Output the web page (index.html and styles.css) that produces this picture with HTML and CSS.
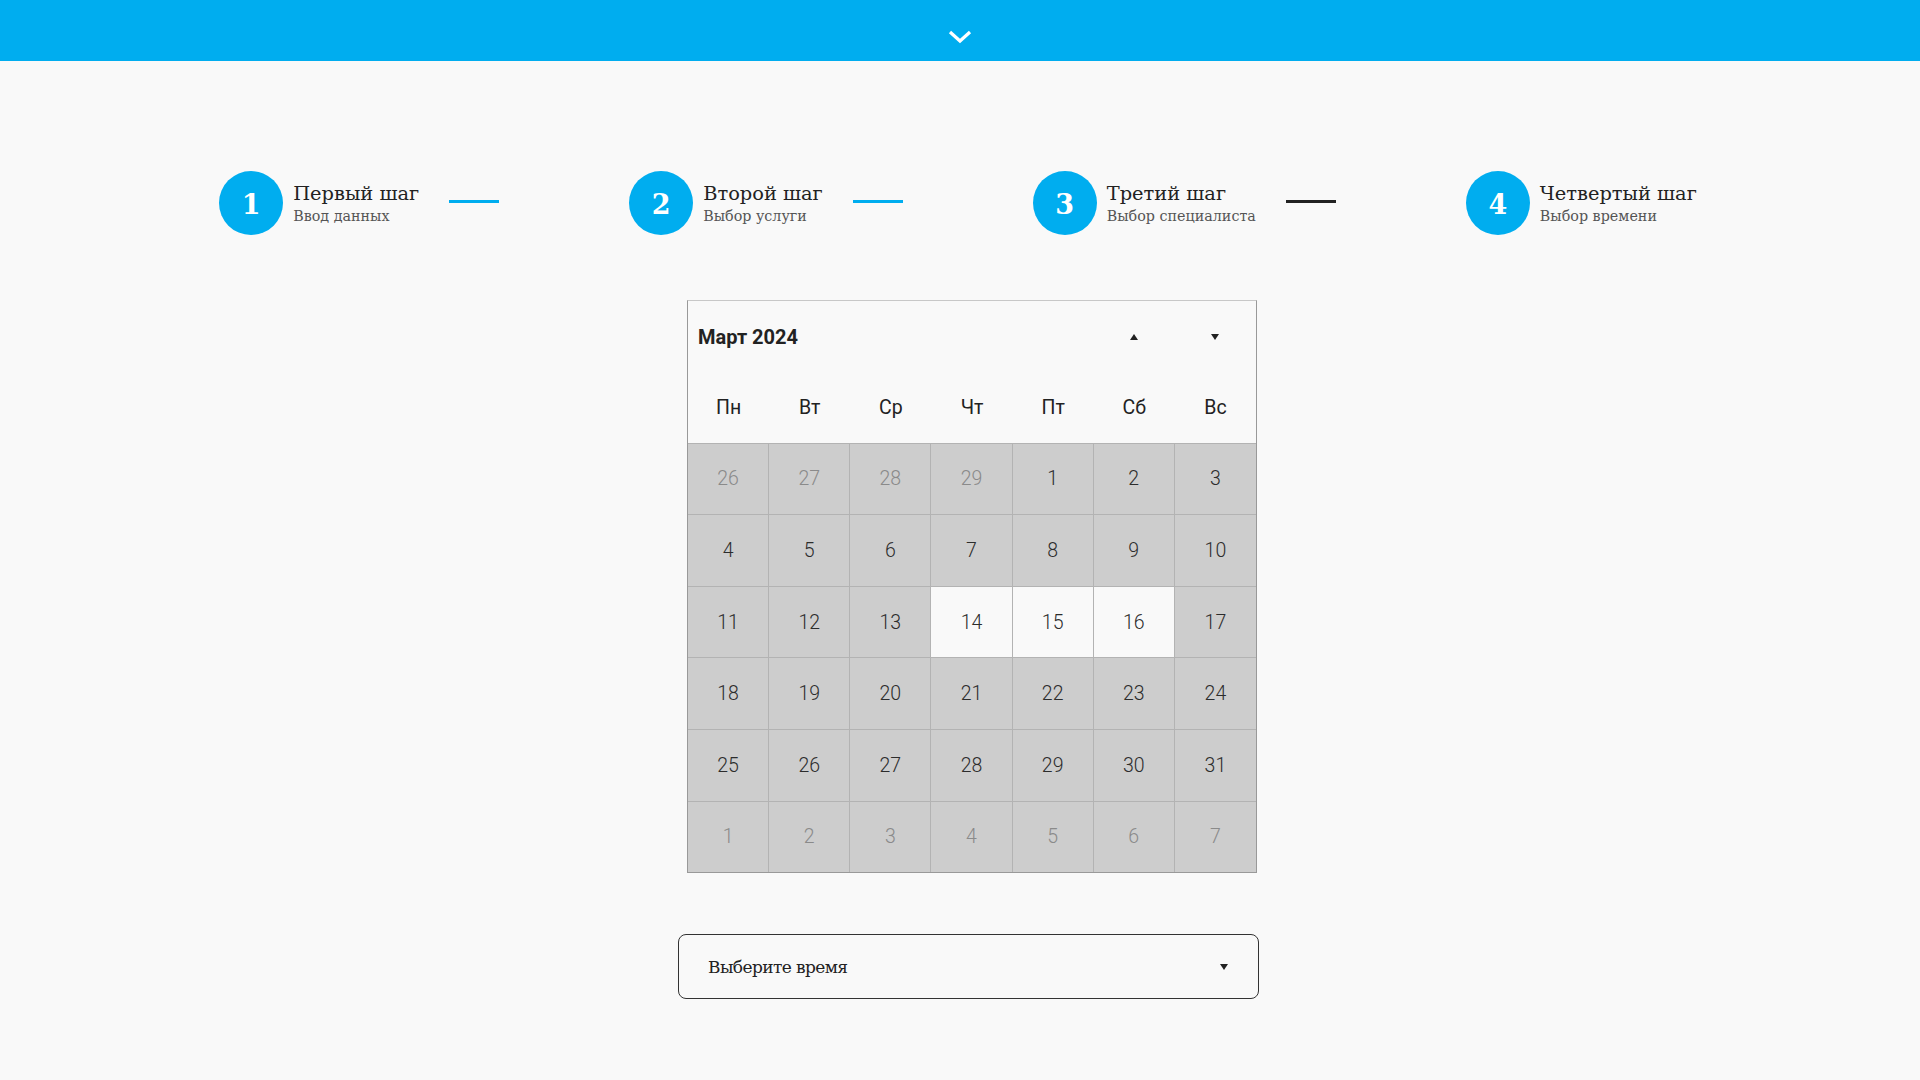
FILE: index.html
```html
<!DOCTYPE html>
<html lang="ru">
<head>
<meta charset="utf-8">
<title>Запись</title>
<link rel="stylesheet" href="styles.css">
</head>
<body>
<header class="topbar">
  <svg class="chevron" width="24" height="14" viewBox="0 0 24 14"><path d="M2 2 L12 11 L22 2" fill="none" stroke="#fff" stroke-width="3.2"/></svg>
</header>
<main class="content">
  <ol class="steps">
    <li class="step">
      <span class="step-num">1</span>
      <span class="step-text"><span class="step-title">Первый шаг</span><span class="step-sub">Ввод данных</span></span>
      <span class="step-line done"></span>
    </li>
    <li class="step">
      <span class="step-num">2</span>
      <span class="step-text"><span class="step-title">Второй шаг</span><span class="step-sub">Выбор услуги</span></span>
      <span class="step-line done"></span>
    </li>
    <li class="step">
      <span class="step-num">3</span>
      <span class="step-text"><span class="step-title">Третий шаг</span><span class="step-sub">Выбор специалиста</span></span>
      <span class="step-line"></span>
    </li>
    <li class="step">
      <span class="step-num">4</span>
      <span class="step-text"><span class="step-title">Четвертый шаг</span><span class="step-sub">Выбор времени</span></span>
    </li>
  </ol>

  <section class="calendar">
    <div class="cal-title">Март 2024</div>
    <div class="cal-nav"><span class="tri up"></span></div>
    <div class="cal-nav"><span class="tri down"></span></div>
    <div class="wd">Пн</div><div class="wd">Вт</div><div class="wd">Ср</div><div class="wd">Чт</div><div class="wd">Пт</div><div class="wd">Сб</div><div class="wd">Вс</div>
    <div class="day muted">26</div><div class="day muted">27</div><div class="day muted">28</div><div class="day muted">29</div><div class="day">1</div><div class="day">2</div><div class="day last">3</div>
    <div class="day">4</div><div class="day">5</div><div class="day">6</div><div class="day">7</div><div class="day">8</div><div class="day">9</div><div class="day last">10</div>
    <div class="day">11</div><div class="day">12</div><div class="day">13</div><div class="day free">14</div><div class="day free">15</div><div class="day free">16</div><div class="day last">17</div>
    <div class="day">18</div><div class="day">19</div><div class="day">20</div><div class="day">21</div><div class="day">22</div><div class="day">23</div><div class="day last">24</div>
    <div class="day">25</div><div class="day">26</div><div class="day">27</div><div class="day">28</div><div class="day">29</div><div class="day">30</div><div class="day last">31</div>
    <div class="day muted bottom">1</div><div class="day muted bottom">2</div><div class="day muted bottom">3</div><div class="day muted bottom">4</div><div class="day muted bottom">5</div><div class="day muted bottom">6</div><div class="day muted bottom last">7</div>
  </section>

  <div class="select">
    <span class="select-text">Выберите время</span>
    <span class="tri down"></span>
  </div>
</main>
</body>
</html>
```

FILE: styles.css
```css
* { box-sizing: border-box; }
html, body { margin: 0; padding: 0; }
body {
  background: #f9f9f9;
  font-family: Roboto, "Liberation Sans", sans-serif;
  color: #222;
  width: 1920px;
  height: 1080px;
  overflow: hidden;
}
.topbar {
  height: 61px;
  background: #00adef;
  display: flex;
  justify-content: center;
  align-items: flex-start;
  padding-top: 30px;
}
.chevron { display: block; }

.content {
  display: flex;
  flex-direction: column;
  align-items: flex-start;
}

.steps {
  list-style: none;
  margin: 110px 0 0 0;
  padding: 0 4px 0 0;
  width: 1920px;
  display: flex;
  justify-content: center;
  gap: 130px;
}
.step {
  display: flex;
  align-items: center;
  height: 64px;
}
.step-num {
  width: 64px;
  height: 64px;
  border-radius: 50%;
  background: #00adef;
  color: #fff;
  font-family: "DejaVu Serif", serif;
  font-weight: bold;
  font-size: 27px;
  display: flex;
  align-items: center;
  justify-content: center;
  flex-shrink: 0;
  padding-top: 2px;
}
.step-text {
  display: flex;
  flex-direction: column;
  margin-left: 10px;
  padding-top: 2px;
}
.step-title {
  font-family: "DejaVu Serif", serif;
  font-size: 19.4px;
  line-height: 24px;
  color: #222;
}
.step-sub {
  font-family: "DejaVu Serif", serif;
  font-size: 14.3px;
  line-height: 19px;
  color: #555;
  padding-top: 1px;
}
.step-line {
  width: 50px;
  height: 3px;
  background: #222;
  margin-left: 30px;
  margin-top: -4px;
}
.step-line.done { background: #00adef; }

.calendar {
  margin: 65px 0 0 687px;
  width: 570px;
  display: grid;
  grid-template-columns: repeat(7, 1fr);
  grid-template-rows: 70px repeat(7, 71.6px);
  border: 1px solid #999;
  border-top-color: #c8c8c8;
  background: #f9f9f9;
}
.cal-title {
  grid-column: span 5;
  display: flex;
  align-items: center;
  padding-left: 10px;
  font-weight: 700;
  font-size: 20px;
  color: #222;
  padding-top: 2px;
}
.cal-nav {
  display: flex;
  align-items: center;
  justify-content: center;
  padding-top: 2px;
}
.tri {
  display: block;
  width: 0;
  height: 0;
  border-left: 4px solid transparent;
  border-right: 4px solid transparent;
}
.tri.up { border-bottom: 6px solid #222; }
.tri.down { border-top: 6px solid #222; }
.wd {
  display: flex;
  align-items: center;
  justify-content: center;
  font-size: 19.5px;
  color: #222;
  padding-top: 2px;
}
.day {
  display: flex;
  align-items: center;
  justify-content: center;
  background: #cdcdcd;
  border-right: 1px solid #b3b3b3;
  border-top: 1px solid #b3b3b3;
  font-size: 19.5px;
  font-weight: 300;
  color: #2c2c2c;
}
.day.last { border-right: none; }
.day.muted { color: #8a8a8a; }
.day.free { background: #f9f9f9; }

.select {
  margin: 61px 0 0 678px;
  width: 581px;
  height: 65px;
  border: 1px solid #333;
  border-radius: 8px;
  display: flex;
  align-items: center;
  justify-content: space-between;
  padding: 0 30px 0 29px;
}
.select-text {
  font-family: "DejaVu Serif", serif;
  font-size: 17px;
  letter-spacing: -0.6px;
  color: #222;
  padding-top: 1px;
}
```
